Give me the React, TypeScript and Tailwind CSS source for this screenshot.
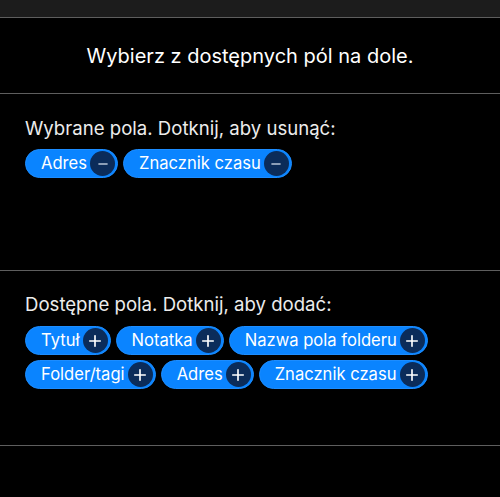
import { Minus, Plus } from "lucide-react";

const selected = ["Adres", "Znacznik czasu"];
const available = ["Tytuł", "Notatka", "Nazwa pola folderu", "Folder/tagi", "Adres", "Znacznik czasu"];

function Chip({ label, add }: { label: string; add: boolean }) {
  return (
    <button className="flex items-center h-[29px] rounded-full bg-[#0a84ff] pl-[15px] pr-[2px] gap-[3px] text-[16.6px] text-white border border-[#1d8dff]">
      <span className="leading-none">{label}</span>
      <span className="flex items-center justify-center w-[25px] h-[25px] rounded-full bg-[#0b2c5a]">
        {add ? (
          <Plus className="w-[18px] h-[18px] text-white" strokeWidth={2.2} />
        ) : (
          <Minus className="w-[14px] h-[14px] text-[#b7c4d6]" strokeWidth={2.5} />
        )}
      </span>
    </button>
  );
}

export default function App() {
  return (
    <div className="w-[500px] h-[497px] bg-black overflow-hidden" style={{ fontFamily: "Inter, 'Noto Sans', sans-serif" }}>
      {/* Top bar */}
      <div className="h-[18px] bg-[#1c1c1c] border-b border-[#5e5e5e]" />

      {/* Title */}
      <div className="h-[76px] flex items-center justify-center border-b border-[#5e5e5e]">
        <p className="text-[20px] text-white">Wybierz z dostępnych pól na dole.</p>
      </div>

      {/* Selected */}
      <section className="h-[177px] border-b border-[#5e5e5e] px-[25px] pt-[21px]">
        <h2 className="text-[18.6px] text-[#ececec] leading-[26px]">Wybrane pola. Dotknij, aby usunąć:</h2>
        <div className="mt-[8px] flex flex-wrap gap-[5px]">
          {selected.map((s) => (
            <Chip key={s} label={s} add={false} />
          ))}
        </div>
      </section>

      {/* Available */}
      <section className="h-[175px] border-b border-[#5e5e5e] px-[25px] pt-[20px]">
        <h2 className="text-[18.6px] text-[#ececec] leading-[26px]">Dostępne pola. Dotknij, aby dodać:</h2>
        <div className="mt-[9px] flex flex-wrap gap-x-[5px] gap-y-[5px]">
          {available.map((s) => (
            <Chip key={s} label={s} add />
          ))}
        </div>
      </section>
    </div>
  );
}
